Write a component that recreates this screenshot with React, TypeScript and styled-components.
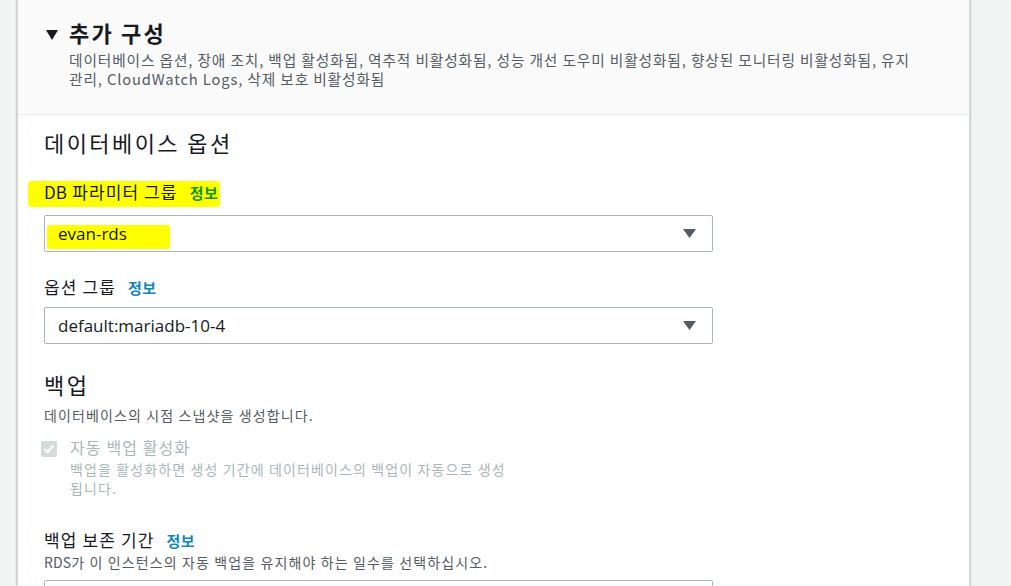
import React from 'react';
import styled, { createGlobalStyle } from 'styled-components';

const GlobalStyle = createGlobalStyle`
  html, body {
    margin: 0;
    padding: 0;
  }
  body {
    background: #f2f3f3;
    font-family: "Noto Sans CJK KR", "Open Sans", sans-serif;
    color: #16191f;
    letter-spacing: 0.07em;
    word-break: keep-all;
  }
`;

interface SpaceProps {
  top?: number;
  bottom?: number;
}

interface MarkProps {
  left: number;
  right: number;
  up: number;
  down: number;
}

const Page = styled.div`
  display: flex;
  height: 586px;
  overflow: hidden;
  padding-left: 17px;
`;

const Panel = styled.div`
  width: 951px;
  display: flex;
  flex-direction: column;
  background: #fff;
  border-left: 1px solid #d5dbdb;
  border-right: 1px solid #d5dbdb;
  box-shadow: 1px 0 1px 0 rgba(0, 28, 36, 0.15), -1px 0 1px 0 rgba(0, 28, 36, 0.15);
`;

const Header = styled.div`
  display: grid;
  grid-template-columns: 12px 1fr;
  column-gap: 11px;
  padding: 18px 36px 26px 28px;
  background: #fafafa;
  border-bottom: 1px solid #eaeded;
`;

const Caret = styled.svg`
  display: block;
  margin-top: 12px;
`;

const Title = styled.h2`
  margin: 0;
  font-size: 22px;
  line-height: 28px;
  font-weight: 700;
  letter-spacing: 0.1em;
`;

const HeaderDesc = styled.p`
  grid-column: 2;
  margin: 4px 0 0;
  font-size: 14.7px;
  line-height: 19px;
  color: #545b64;
  letter-spacing: 0.06em;
`;

// latin words sit in the korean run without the extra tracking
const Latin = styled.span`
  display: inline-block;
  letter-spacing: 0.01em;
`;

const Body = styled.div`
  padding: 13px 20px 0 26px;
`;

const SectionTitle = styled.h3<SpaceProps>`
  margin: ${p => p.top || 0}px 0 0;
  font-size: 22px;
  line-height: 28px;
  font-weight: 400;
  letter-spacing: 0.11em;
`;

const Label = styled.div<SpaceProps>`
  margin: ${p => p.top || 0}px 0 ${p => p.bottom || 0}px;
  font-size: 17px;
  line-height: 22px;
`;

const Info = styled.span<{ marked?: boolean }>`
  margin-left: 12px;
  font-size: 15px;
  font-weight: 700;
  letter-spacing: 0.04em;
  color: ${p => (p.marked ? '#119400' : '#0f86c2')};
`;

const Mark = styled.span<MarkProps>`
  position: relative;
  z-index: 0;
  display: inline-block;

  &::before {
    content: '';
    position: absolute;
    top: ${p => p.up}px;
    bottom: ${p => p.down}px;
    left: ${p => p.left}px;
    right: ${p => p.right}px;
    background: #ffff00;
    border-radius: 3px;
    z-index: -1;
  }
`;

const Select = styled.div<SpaceProps>`
  box-sizing: border-box;
  width: 669px;
  height: 37px;
  margin: ${p => p.top || 0}px 0 0;
  padding: 0 16px 0 13px;
  display: flex;
  align-items: center;
  justify-content: space-between;
  border: 1px solid #aab7b8;
  border-radius: 2px;
  background: #fff;
  font-family: "Open Sans", "Noto Sans CJK KR", sans-serif;
  font-size: 17px;
  letter-spacing: normal;
`;

const Desc = styled.p<SpaceProps>`
  margin: ${p => p.top || 0}px 0 0;
  font-size: 14px;
  line-height: 20px;
  color: #545b64;
`;

const CheckRow = styled.div`
  display: grid;
  grid-template-columns: 16px 1fr;
  column-gap: 13px;
  margin: 11px 0 0 -3px;
`;

const CheckBox = styled.span`
  width: 16px;
  height: 16px;
  margin-top: 5px;
  border-radius: 2px;
  background: #d5dbdb;
  display: flex;
  align-items: center;
  justify-content: center;
`;

const CheckLabel = styled.div`
  font-size: 16px;
  line-height: 22px;
  color: #aab7b8;
`;

const CheckDesc = styled.p`
  grid-column: 2;
  max-width: 472px;
  margin: 2px 0 0;
  font-size: 14px;
  line-height: 19px;
  color: #aab7b8;
`;

const DownArrow = () => (
  <svg width="13" height="9" viewBox="0 0 13 9">
    <polygon points="0,0 13,0 6.5,9" fill="#545b64" />
  </svg>
);

const App: React.FC = () => (
  <>
    <GlobalStyle />
    <Page>
      <Panel>
        <Header>
          <Caret width="12" height="10" viewBox="0 0 12 10">
            <polygon points="0,0 12,0 6,10" fill="#16191f" />
          </Caret>
          <Title>추가 구성</Title>
          <HeaderDesc>
            데이터베이스 옵션, 장애 조치, 백업 활성화됨, 역추적 비활성화됨, 성능 개선 도우미 비활성화됨, 향상된 모니터링 비활성화됨, 유지
            관리, CloudWatch Logs, 삭제 보호 비활성화됨
          </HeaderDesc>
        </Header>

        <Body>
          <SectionTitle>데이터베이스 옵션</SectionTitle>

          <Label top={25} bottom={11}>
            <Mark left={-16} right={-2} up={0} down={-3}>
              <Latin>DB</Latin> 파라미터 그룹<Info marked>정보</Info>
            </Mark>
          </Label>
          <Select>
            <Mark left={-11} right={-43} up={3} down={-4}>evan-rds</Mark>
            <DownArrow />
          </Select>

          <Label top={24} bottom={8}>
            옵션 그룹<Info>정보</Info>
          </Label>
          <Select>
            <span>default:mariadb-10-4</span>
            <DownArrow />
          </Select>

          <SectionTitle top={26}>백업</SectionTitle>
          <Desc top={7}>데이터베이스의 시점 스냅샷을 생성합니다.</Desc>

          <CheckRow>
            <CheckBox>
              <svg width="12" height="10" viewBox="0 0 12 10">
                <polyline points="1.5,5 4.5,8 10.5,1.5" fill="none" stroke="#fff" strokeWidth="2.4" />
              </svg>
            </CheckBox>
            <CheckLabel>자동 백업 활성화</CheckLabel>
            <CheckDesc>백업을 활성화하면 생성 기간에 데이터베이스의 백업이 자동으로 생성 됩니다.</CheckDesc>
          </CheckRow>

          <Label top={31}>
            백업 보존 기간<Info>정보</Info>
          </Label>
          <Desc>
            <Latin>RDS</Latin>가 이 인스턴스의 자동 백업을 유지해야 하는 일수를 선택하십시오.
          </Desc>
          <Select top={8} />
        </Body>
      </Panel>
    </Page>
  </>
);

export default App;
